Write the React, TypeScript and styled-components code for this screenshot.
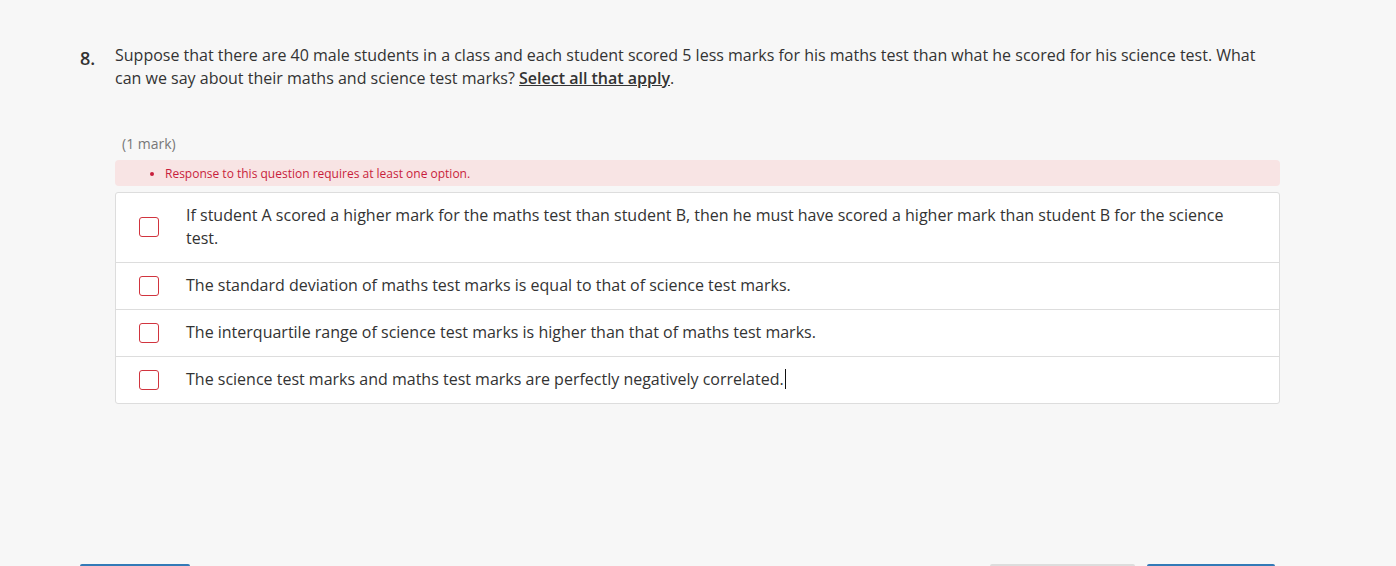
import React from "react";
import styled, { createGlobalStyle } from "styled-components";

const Global = createGlobalStyle`
  html, body { margin: 0; padding: 0; background: #f7f7f7; }
  body { font-family: "Open Sans", "Liberation Sans", sans-serif; color: #333; overflow: hidden; }
`;

const Page = styled.div`
  width: 1396px;
  height: 566px;
  box-sizing: border-box;
  padding: 44px 116px 0 80px;
  display: flex;
  flex-direction: column;
`;

const Question = styled.div`
  display: flex;
  align-items: flex-start;
`;

const Number = styled.div`
  width: 35px;
  flex: none;
  font-size: 18px;
  font-weight: 600;
  line-height: 23px;
  padding-top: 3px;
  color: #333;
`;

const Stem = styled.div`
  font-size: 16px;
  line-height: 23px;
  color: #333;
  padding-right: 20px;
`;

const Strong = styled.span`
  font-weight: 600;
  text-decoration: underline;
`;

const Body = styled.div`
  margin-left: 35px;
  margin-top: 44px;
  display: flex;
  flex-direction: column;
`;

const Marks = styled.div`
  font-size: 14px;
  line-height: 19px;
  color: #777;
  padding-left: 7px;
  margin-bottom: 7px;
`;

const ErrorBox = styled.ul`
  margin: 0 0 6px;
  background: #f8e4e4;
  border-radius: 4px;
  padding: 5px 0 3px 50px;
  font-size: 12px;
  line-height: 18px;
  color: #c81e3c;
`;

const Options = styled.div`
  background: #fff;
  border: 1px solid #dddddd;
  border-radius: 3px;
  display: flex;
  flex-direction: column;
`;

const Row = styled.label`
  display: flex;
  align-items: center;
  padding: 11px 40px 12px 23px;
  border-top: ${(p: { $first?: boolean }) => (p.$first ? "none" : "1px solid #dddddd")};
`;

const Box = styled.span`
  width: 18px;
  height: 18px;
  flex: none;
  border: 1.5px solid #d1343e;
  border-radius: 3px;
  margin-right: 27px;
  box-sizing: content-box;
`;

const OptText = styled.span`
  font-size: 16px;
  line-height: 23px;
  color: #333;
`;

const Caret = styled.span`
  display: inline-block;
  width: 1px;
  height: 20px;
  background: #111;
  vertical-align: -4px;
  margin-left: 1px;
`;

const Footer = styled.div`
  margin-top: auto;
  display: flex;
  align-items: flex-end;
  padding-right: 5px;
  gap: 12px;
  height: 2px;
`;

const Btn = styled.div`
  height: 2px;
  width: ${(p: { $w: number; $grey?: boolean }) => p.$w}px;
  background: ${(p: { $w: number; $grey?: boolean }) => (p.$grey ? "#dddddd" : "#337ab7")};
  border-radius: 3px 3px 0 0;
`;

const Spacer = styled.div`
  flex: 1;
`;

const options = [
  "If student A scored a higher mark for the maths test than student B, then he must have scored a higher mark than student B for the science test.",
  "The standard deviation of maths test marks is equal to that of science test marks.",
  "The interquartile range of science test marks is higher than that of maths test marks.",
  "The science test marks and maths test marks are perfectly negatively correlated.",
];

export default function App() {
  return (
    <>
      <Global />
      <Page>
        <Question>
          <Number>8.</Number>
          <Stem>
            Suppose that there are 40 male students in a class and each student scored 5 less marks for his maths test
            than what he scored for his science test. What can we say about their maths and science test marks?{" "}
            <Strong>Select all that apply</Strong>.
          </Stem>
        </Question>
        <Body>
          <Marks>(1 mark)</Marks>
          <ErrorBox>
            <li>Response to this question requires at least one option.</li>
          </ErrorBox>
          <Options>
            {options.map((o, i) => (
              <Row key={i} $first={i === 0}>
                <Box />
                <OptText>
                  {o}
                  {i === options.length - 1 && <Caret />}
                </OptText>
              </Row>
            ))}
          </Options>
        </Body>
        <Footer>
          <Btn $w={110} />
          <Spacer />
          <Btn $w={145} $grey />
          <Btn $w={128} />
        </Footer>
      </Page>
    </>
  );
}
